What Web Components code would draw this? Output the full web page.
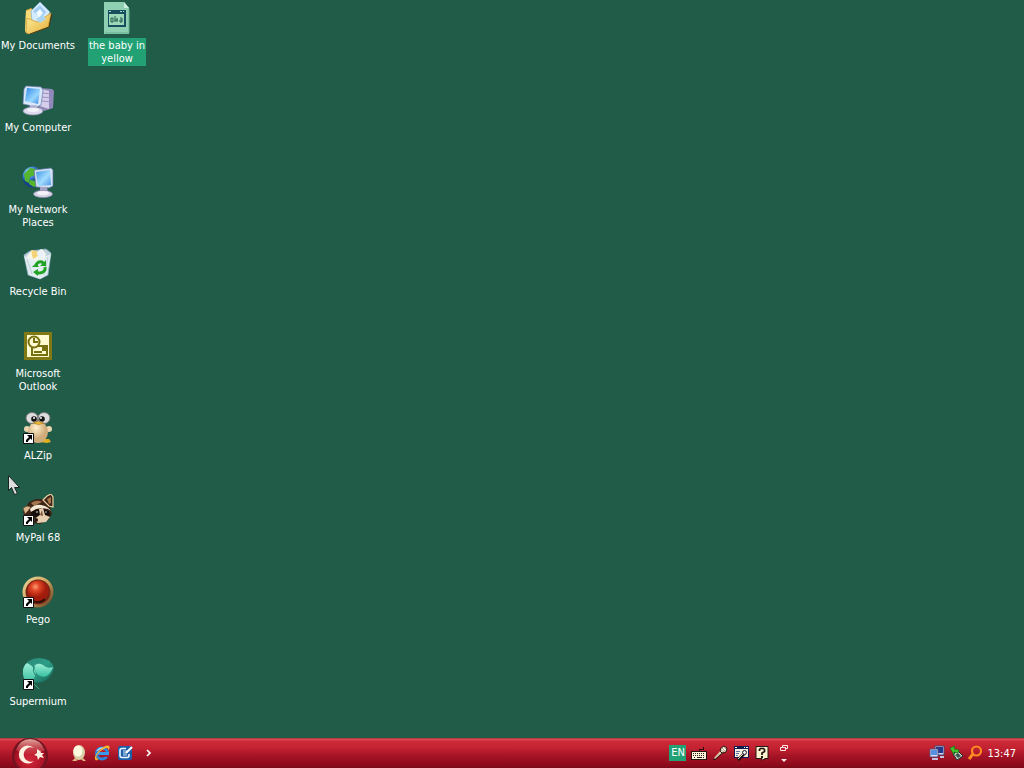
<!DOCTYPE html>
<html lang="en">
<head>
<meta charset="utf-8">
<title>Desktop</title>
<style>
html, body { height: 100%; margin: 0; }
body { overflow: hidden; background: #215c49; color: #fff; font: 11px/13px "DejaVu Sans Condensed", "Noto Sans", sans-serif; }
</style>
</head>
<body>
<desk-top></desk-top>

<script>
const ART = {
documents: `<svg viewBox="0 0 32 32"><defs><linearGradient id="a" x2="1" y2="1"><stop stop-color="#fff3a0"/><stop offset="1" stop-color="#e3ab38"/></linearGradient></defs>
<path d="M4 8l5-2 3 2 14 2 2 3-1 12-20 7-4-3z" fill="#d0a23a"/><path d="M4 9l6-2 2 2v20l-7 2-2-2z" fill="#f8dc78"/>
<path d="M9 9l9-9 10 10-6 12-12-3z" fill="#d5ebff" stroke="#83aed5" stroke-width=".7"/><path d="M11 9l7-6 6 7-5 7z" fill="#a3ccf3"/><path d="M14 11l4-4 3 4-4 5z" fill="#f5fcff"/>
<path d="M5 16l10 4 14-9-3 14-18 7-4-1z" fill="url(#a)" stroke="#d09a2d" stroke-width=".7"/><path d="M14 17l6-4 4 4-6 4z" fill="#acd6ef"/><path d="M30 12l-3 13-19 7" fill="none" stroke="#493719"/></svg>`,
computer: `<svg viewBox="0 0 32 32"><defs><linearGradient id="a" x2="1" y2="1"><stop stop-color="#2f86e6"/><stop offset=".6" stop-color="#98d8ff"/><stop offset="1" stop-color="#3884dc"/></linearGradient></defs>
<path d="M18 4l12 1 2 2-1 17-9 3-5-3z" fill="#918ab7"/><path d="M19 5l8 2v18l-9-3z" fill="#d5cdea"/><path d="M27 7l4-1-1 17-3 2z" fill="#8f87bb"/><path d="M20 9l10 1M20 13l10 1M20 17l10 1" stroke="#9b92c3"/>
<path d="M4 2l15 1 2 3-2 15-4 2-14-3 1-15z" fill="#d8e8f9" stroke="#697eb0" stroke-width=".7"/><path d="M5 4l13 1-2 15-13-3z" fill="url(#a)"/><path d="M8 21h7l1 5H7z" fill="#bcbbd9"/><ellipse cx="11" cy="27" rx="10" ry="4" fill="#dcdaec" stroke="#9292b6" stroke-width=".7"/><ellipse cx="11" cy="26" rx="6" ry="2" fill="#f2f2fa"/></svg>`,
network: `<svg viewBox="0 0 32 32"><defs><radialGradient id="g" cx=".3" cy=".25"><stop stop-color="#9bdcff"/><stop offset=".7" stop-color="#3275cc"/><stop offset="1" stop-color="#153f8c"/></radialGradient><linearGradient id="a" x2="1" y2="1"><stop stop-color="#3f94e8"/><stop offset=".55" stop-color="#a2dcff"/><stop offset="1" stop-color="#4b95e3"/></linearGradient></defs>
<circle cx="11" cy="11" r="10.500" fill="url(#g)"/><path d="M2 8l6-6 6 1-1 6-5 2-1 6-4-2zM15 2l4 3-2 4-3-3zM8 14l6 1 2 5-4 1-5-3z" fill="#55b52d"/>
<path d="M12 4l17-2 2 2v16l-4 2-13-1z" fill="#d4e1f2" stroke="#536b9f" stroke-width=".7"/><path d="M14 6l14-2 1 15-13 1z" fill="url(#a)"/><path d="M18 21h7l1 6h-8z" fill="#a4a3c4"/><ellipse cx="21" cy="28" rx="9.500" ry="3.600" fill="#d8d4e7" stroke="#8e89b0" stroke-width=".7"/><ellipse cx="21" cy="27" rx="6" ry="2" fill="#f4f1fa"/></svg>`,
recycle: `<svg viewBox="0 0 32 32"><path d="M2 7l6-4 16-2 5 4-3 22-8 4-12-4z" fill="#bcd2de" stroke="#8fadc0" stroke-width=".7"/><path d="M5 8l5-6 5 2 5-3 4 5-2 7H7z" fill="#f7f6e5"/><path d="M9 2l6 1 1 5-5 3z" fill="#f3d278"/><path d="M15 5l4-4 4 6-6 4z" fill="#e9f1f9"/>
<path d="M2 8l13 4 14-6-4 21-7 4-11-4z" fill="#e7f0f4" fill-opacity=".88"/><path d="M5 11l5 15M26 9l-4 18" stroke="#bccfda" fill="none"/>
<g fill="none" stroke="#20a322" stroke-width="3"><path d="M14 18q1-5 6-4l2 2"/><path d="M23 19q1 5-5 6h-3"/></g><path d="M24 12v6h-6zM16 21v7l-5-4zM10 19h7l-3-4z" fill="#20a322"/></svg>`,
outlook: `<svg viewBox="0 0 32 32"><path fill="#807914" d="M2 2h28v28H2z"/><path fill="#fffbd1" d="M5 5h22v22H5z"/><path d="M10 16h15v9H10z" fill="#fffbd1" stroke="#77700f" stroke-width="2"/><circle cx="12" cy="12" r="5.500" fill="#fffbd1" stroke="#77700f" stroke-width="2"/><path d="M12 8v4h4M12 22h8" fill="none" stroke="#77700f" stroke-width="2"/><path fill="#77700f" d="M20 17h4v4h-4z"/></svg>`,
alzip: `<svg viewBox="0 0 32 32"><defs><radialGradient id="a" cx=".4" cy=".3"><stop stop-color="#fff0cf"/><stop offset="1" stop-color="#ceab78"/></radialGradient></defs><path d="M19 27h8l2 3-4 1-7-1z" fill="#dfaf20"/><circle cx="5" cy="17" r="3" fill="#ead5b0"/><circle cx="27" cy="17" r="3" fill="#ead5b0"/><ellipse cx="16" cy="20" rx="10" ry="11" fill="url(#a)"/>
<ellipse cx="10" cy="6" rx="6" ry="5.500" fill="#ddd" stroke="#777"/><ellipse cx="22" cy="6" rx="6" ry="5.500" fill="#ddd" stroke="#777"/><circle cx="12" cy="7" r="2.800" fill="#111"/><circle cx="20" cy="7" r="2.800" fill="#111"/><circle cx="12" cy="6" r="1" fill="#fff"/><circle cx="19" cy="6" r="1" fill="#fff"/><path d="M11 11q5-3 11 0-5 3-11 0z" fill="#f0bd38" stroke="#ae7b22" stroke-width=".6"/></svg>`,
mypal: `<svg viewBox="0 0 32 32"><path d="M4 13l3-5 7-3 7 0 3 2 4 6 2 7-4 6-8 4-9-1-6-6-2-5z" fill="#3c2517"/><path d="M21 6l4-4 4-2 2 3v10l-4-1z" fill="#3c2517" stroke="#efd2a6" stroke-width="1.200"/><path d="M25 5l4-2v6l-2 1z" fill="#a8754c"/><path d="M1 14l4-2 4 1-3 4-3 3z" fill="#d9b58d" stroke="#5a3822" stroke-width=".6"/><path d="M9 9q6-4 11-1l-8 4z" fill="#a37650"/><path d="M8 15q5-5 11-4 7 1 10 6l-3-2-6-1-6 1-5 3z" fill="#f7ead4"/><path d="M9 18l7-3 3 4-4 4-6-1zM21 15l6 2 1 5-5-1z" fill="#160e0a"/><path d="M17 15l4-1 2 7 5 2-4 5-8 1-5-3 4-3 3-2z" fill="#e5cfb0"/><path d="M18 21l2-5 1 6z" fill="#80533a"/><circle cx="14" cy="26" r="2" fill="#211812"/><circle cx="15" cy="18" r=".8" fill="#fff"/><circle cx="24" cy="18" r=".7" fill="#fff"/></svg>`,
pego: `<svg viewBox="0 0 32 32"><defs><radialGradient id="a" cx=".38" cy=".3"><stop stop-color="#ff9a73"/><stop offset=".4" stop-color="#df4525"/><stop offset="1" stop-color="#a11c0c"/></radialGradient><linearGradient id="b" x2="1" y2="1"><stop stop-color="#f0dc9c"/><stop offset=".5" stop-color="#cba15d"/><stop offset="1" stop-color="#55321b"/></linearGradient></defs><circle cx="16" cy="16" r="15.500" fill="url(#b)"/><circle cx="16" cy="16" r="12.500" fill="#7b2413"/><circle cx="16" cy="15" r="10.500" fill="url(#a)"/><path d="M9 24q8 5 14-1" fill="none" stroke="#351008" stroke-width="2"/></svg>`,
supermium: `<svg viewBox="0 0 32 32"><defs><linearGradient id="a" x2="1" y2="1"><stop stop-color="#2b8577"/><stop offset=".5" stop-color="#2d9e88"/><stop offset="1" stop-color="#146050"/></linearGradient><linearGradient id="b" x2="0" y2="1"><stop stop-color="#9ceed6"/><stop offset="1" stop-color="#35bf9f"/></linearGradient></defs><path d="M1 11Q5 0 17 0q12 0 15 10-2 10-12 14-13 2-18-4z" fill="url(#a)"/><path d="M1 12q1-5 4-7 7 3 9 10-1 7-8 10-6-4-5-13z" fill="url(#b)"/><path d="M12 8q4-4 9-1 4 4 10 2-3 9-9 10-8 0-10-11z" fill="url(#b)"/><path d="M12 8q-2 6 2 10" fill="none" stroke="#23806c"/><path d="M11 25l6 6" stroke="#37a583"/></svg>`,
game: `<svg viewBox="0 0 32 32"><path fill="#90d0b2" d="M3 0h20l5 6v26H3z"/><path fill="#c9f0dc" d="M23 0v6h5z"/><path d="M4 31h24M28 7v24" stroke="#65ad8f"/><path fill="#174d5d" d="M7 8h18v17H7z"/><path fill="#9cd7b8" d="M8 12h15v11H8z"/><path fill="#9edbd1" d="M8 9h2v1H8zm11 0h2v1h-2zm3 0h1v1h-1z"/><path d="M10 16h2v4h-2zM14 14v6m0-2h3m-1-2v4m3-4h2v4h-2v-2h2" stroke="#245d4d" fill="none"/></svg>`,
egg: `<svg viewBox="0 0 16 16"><ellipse cx="8" cy="7.500" rx="6" ry="7.500" fill="#d8cea8"/><ellipse cx="7" cy="6" rx="4.500" ry="5.500" fill="#fff9df"/><path d="M4 13l-3 3h4l2-1zM10 14l2 2h3l-3-3z" fill="#dfb783"/></svg>`,
ie: `<svg viewBox="0 0 16 16"><circle cx="8" cy="8.500" r="5.500" fill="none" stroke="#2b86e0" stroke-width="3"/><path d="M9 10h7v2l-4 0z" fill="#b01a2a"/><path d="M4 7h11v3H4z" fill="#3a97ec"/><path d="M3 6q3-4 8-3" stroke="#a5e3ff" fill="none" stroke-width="1.200"/><path d="M2 15.500Q-1 13 4 7 10 0 14 .5q3 1 .5 5 0-3.500-3-2.500Q5 6 2.500 11q-1 3 2 2.500-1 2-2.500 2z" fill="#ffb72e"/></svg>`,
show: `<svg viewBox="0 0 16 16"><rect x="1" y="1" width="14" height="14" rx="2" fill="#1d5fa8"/><path d="M9 3.500H5q-2 0-2 2v5q0 2 2 2h5q2 0 2-2V9" fill="none" stroke="#eaf5ff" stroke-width="1.600"/><path d="M6 6h4M6 8h3M6 10h4" stroke="#cfe6fb" stroke-width="1.200"/><path d="M9 8l6-6" stroke="#fff" stroke-width="2.200"/></svg>`,
keyboard: `<svg viewBox="0 0 16 16" shape-rendering="crispEdges"><path d="M8 6V4h4V2" fill="none" stroke="#340d0d"/><path fill="#251613" d="M0 6h16v9H0z"/><path fill="#fff1d7" d="M1 7h14v7H1z"/><path d="M2 8.500h12M2 10.500h12" stroke="#25201b" stroke-dasharray="1 1"/><path d="M3 12.500h1m2 0h5m1 0h1" stroke="#25201b"/></svg>`,
mic: `<svg viewBox="0 0 16 16"><path d="M1 15l8-9 2 2-8 7z" fill="#21100e"/><path d="M2 13l7-8 2 2-8 7z" fill="#dcc7a6"/><path d="M9 3l3-2 3 2-1 4-4 1-2-2z" fill="#fff3db" stroke="#28120e"/><path d="M10 3l3 3M12 2l2 2M9 5l3 2" stroke="#665b4b" stroke-width=".6"/></svg>`,
tools: `<svg viewBox="0 0 16 16"><path fill="#111b51" d="M1 1h15v12H1z"/><path fill="#f9eedb" d="M2 4h13v8H2z"/><path fill="#fff" d="M2 2h2v1H2zm9 0h1v1h-1zm2 0h2v1h-2z"/><path d="M3 6.500h4M3 8.500h3M3 10.500h2" stroke="#5875ad"/><path d="M5 15l6-6" stroke="#17131a" stroke-width="3"/><path d="M5 14l6-6" stroke="#e9d5b8"/><circle cx="11.500" cy="7.500" r="2" fill="#eee" stroke="#202030"/></svg>`,
help: `<svg viewBox="0 0 16 16"><path fill="#fff2cf" stroke="#241917" d="M2 1.500h12v12h-3l-3 2v-2H2z"/><path d="M5.500 6V4.500l1-1h3l1 1v2L8 8v2" fill="none" stroke="#181311" stroke-width="1.700"/><path fill="#181311" d="M7 11h2v2H7z"/></svg>`,
lan: `<svg viewBox="0 0 16 16"><path d="M6 1h9v9H6z" fill="#c9d4f0" stroke="#4a466a"/><path d="M7 2h7v6H7z" fill="#22398f"/><path d="M1 4h8v8H1z" fill="#d6def8" stroke="#564f7a"/><path d="M2 5h6v5H2z" fill="#5691e1"/><path d="M3 13h6v2H3zM11 11h4v2h-4z" fill="#c9c1dc"/></svg>`,
safe: `<svg viewBox="0 0 16 16"><path d="M5 9l5-3 5 5-6 4z" fill="#d3dad2" stroke="#173328"/><path d="M7 10l3-2 3 3-3 2z" fill="#40574e"/><path d="M2 3l5-2-1 3 5 1-1 3-4-1 0 3z" fill="#42c829" stroke="#156d19" stroke-width=".7"/></svg>`,
search: `<svg viewBox="0 0 16 16"><circle cx="9.500" cy="6" r="4.500" fill="none" stroke="#ff8a22" stroke-width="2.200"/><path d="M6 9l-4 5" stroke="#ff8a22" stroke-width="3"/></svg>`,
shortcut: `<svg viewBox="0 0 11 11"><path fill="#fff" stroke="#111" d="M.5.5h10v10H.5z"/><path fill="#000" d="M4 2h5v5L7.500 5.500 5 8v1H3V7l3-3z"/></svg>`,
restore: `<svg viewBox="0 0 10 8"><path d="M3.500 3V1.500h5v3H7M1.500 3.500h5v3h-5z" fill="none" stroke="#ffe7e7"/></svg>`,
down: `<svg viewBox="0 0 10 4"><path d="M2 0h6L5 3z" fill="#ffe7e7"/></svg>`,
chevron: `<svg viewBox="0 0 8 8"><path d="M2 1l3 3-3 3" fill="none" stroke="#fff" stroke-width="1.700"/></svg>`,
cursor: `<svg viewBox="0 0 13 20"><path d="M.5.500v15l3-3 3 7 3-1-3-6h5z" fill="#dedede" stroke="#182820"/></svg>`,
orb: `<svg viewBox="0 0 38 30"><defs><radialGradient id="a" cx=".5" cy=".65" r=".65"><stop stop-color="#d4283a"/><stop offset=".7" stop-color="#a81024"/><stop offset="1" stop-color="#5b0e17"/></radialGradient><linearGradient id="b" x2="0" y2="1"><stop stop-color="#e8a9a0"/><stop offset="1" stop-color="#c9323e" stop-opacity=".4"/></linearGradient></defs><circle cx="19" cy="18" r="18" fill="#711320"/><circle cx="19" cy="17" r="16" fill="url(#a)"/><path d="M5 12Q9 1 19 1t15 11q-15 9-29 0z" fill="url(#b)"/><path d="M23 10a9 9 0 1 0 0 13 7.200 7.200 0 1 1 0-13z" fill="#fff0df"/><path d="M29 12l1 3 3 0-2 2 2 3-4-1-2 3-1-4-3-1 3-2 0-4 3 2z" fill="#fff0df"/></svg>`
};

const define = (tag, markup, fill) => customElements.define(tag, class extends HTMLElement {
  constructor() {
    super();
    this.attachShadow({ mode: "open" });
  }
  connectedCallback() {
    this.shadowRoot.innerHTML = markup;
    if (fill) fill(this, this.shadowRoot);
  }
});

define("art-icon", "", (host, root) => {
  root.innerHTML = `<style>:host{display:block;flex:none;width:16px;height:16px}svg{display:block;width:100%;height:100%}</style>${ART[host.getAttribute("name")]}`;
});

define("desktop-icon", `<style>
:host{display:block}
button{display:flex;flex-direction:column;align-items:center;gap:4px;width:100%;padding:2px 0 0;border:0;background:none;color:inherit;font:inherit}
.picture{position:relative}
.picture>art-icon{width:32px;height:32px}
.picture>.link{position:absolute;left:1px;bottom:0;width:11px;height:11px}
.label{padding:1px;white-space:nowrap}
:host([selected]) .label{background:#22a175}
:host(:not([shortcut])) .link{display:none}
</style><button type="button"><span class="picture"><span class="main"></span><art-icon class="link" name="shortcut"></art-icon></span><span class="label"><slot></slot></span></button>`,
(host, root) => {
  const icon = document.createElement("art-icon");
  icon.setAttribute("name", host.getAttribute("icon"));
  root.querySelector(".main").replaceWith(icon);
});

define("tool-button", `<style>
:host{display:block;flex:none}
button{display:block;padding:0;border:0;background:none;color:inherit;font:inherit}
</style><button type="button"><slot></slot></button>`, (host, root) => {
  root.querySelector("button").setAttribute("aria-label", host.getAttribute("label"));
});

define("language-bar", `<style>
:host{display:flex;align-items:center;gap:5px}
.lang{display:block;width:17px;line-height:16px;text-align:center;background:#22a175}
.window{display:flex;flex-direction:column;gap:7px;margin-left:4px}
.restore{width:10px;height:8px}.down{width:10px;height:4px}
</style>
<tool-button label="English"><span class="lang">EN</span></tool-button>
<tool-button label="Keyboard"><art-icon name="keyboard"></art-icon></tool-button>
<tool-button label="Microphone"><art-icon name="mic"></art-icon></tool-button>
<tool-button label="Speech tools"><art-icon name="tools"></art-icon></tool-button>
<tool-button label="Help"><art-icon name="help"></art-icon></tool-button>
<div class="window"><tool-button label="Restore"><art-icon class="restore" name="restore"></art-icon></tool-button><tool-button label="Options"><art-icon class="down" name="down"></art-icon></tool-button></div>`);

define("system-tray", `<style>
:host{display:flex;align-items:center;gap:3px}
time{margin-left:1px}
</style>
<art-icon name="lan"></art-icon><art-icon name="safe"></art-icon><art-icon name="search"></art-icon><time>13:47</time>`);

define("task-bar", `<style>
:host{display:flex;align-items:center;height:30px;box-sizing:border-box;padding:0 8px 0 11px;
background:linear-gradient(#7c2a2c 0,#e2505a 1px,#cf2b39 3px,#c32231 10px,#a61426 18px,#8f0b1d 26px,#7c0919 30px)}
.orb{width:38px;height:30px}
.quick{display:flex;align-items:center;gap:7px;margin-left:22px}
.chevron{width:8px;height:8px;margin-left:5px}
language-bar{margin-left:auto;margin-right:140px}
</style>
<tool-button label="Start"><art-icon class="orb" name="orb"></art-icon></tool-button>
<div class="quick">
<tool-button label="ALZip"><art-icon name="egg"></art-icon></tool-button>
<tool-button label="Internet Explorer"><art-icon name="ie"></art-icon></tool-button>
<tool-button label="Show Desktop"><art-icon name="show"></art-icon></tool-button>
<tool-button label="More"><art-icon class="chevron" name="chevron"></art-icon></tool-button>
</div>
<language-bar></language-bar>
<system-tray></system-tray>`);

define("desk-top", `<style>
:host{display:grid;grid-template-rows:minmax(0,1fr) auto;height:100vh;position:relative}
main{display:grid;grid-auto-flow:column;grid-template-rows:repeat(auto-fill,82px);grid-auto-columns:76px;column-gap:3px}
.cursor{position:absolute;left:8px;top:475px;width:13px;height:20px}
</style>
<main>
<desktop-icon icon="documents">My Documents</desktop-icon>
<desktop-icon icon="computer">My Computer</desktop-icon>
<desktop-icon icon="network">My Network<br>Places</desktop-icon>
<desktop-icon icon="recycle">Recycle Bin</desktop-icon>
<desktop-icon icon="outlook">Microsoft<br>Outlook</desktop-icon>
<desktop-icon icon="alzip" shortcut>ALZip</desktop-icon>
<desktop-icon icon="mypal" shortcut>MyPal 68</desktop-icon>
<desktop-icon icon="pego" shortcut>Pego</desktop-icon>
<desktop-icon icon="supermium" shortcut>Supermium</desktop-icon>
<desktop-icon icon="game" selected>the baby in<br>yellow</desktop-icon>
</main>
<task-bar></task-bar>
<art-icon class="cursor" name="cursor"></art-icon>`);
</script>
</body>
</html>
